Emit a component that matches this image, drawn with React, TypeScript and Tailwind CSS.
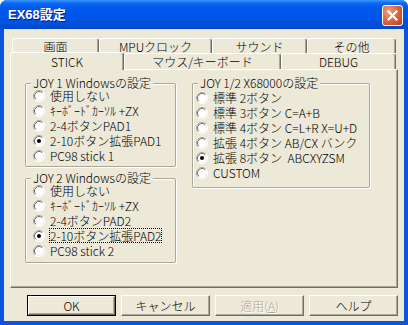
import React from "react";

const JP = "font-['Noto_Sans_CJK_JP','Liberation_Sans',sans-serif]";

function Radio({ checked }: { checked?: boolean }) {
  return (
    <svg width="12" height="12" viewBox="0 0 12 12" className="shrink-0">
      <circle cx="6" cy="6" r="5.5" fill="#ffffff" />
      <path d="M2.11 9.89 A5.5 5.5 0 0 1 9.89 2.11" stroke="#aca899" fill="none" />
      <path d="M9.89 2.11 A5.5 5.5 0 0 1 2.11 9.89" stroke="#ffffff" fill="none" />
      <path d="M2.82 9.18 A4.5 4.5 0 0 1 9.18 2.82" stroke="#716f64" fill="none" />
      <path d="M9.18 2.82 A4.5 4.5 0 0 1 2.82 9.18" stroke="#f1efe2" fill="none" />
      {checked && <circle cx="6" cy="6" r="2" fill="#000000" />}
    </svg>
  );
}

function Row({ label, checked, focus }: { label: string; checked?: boolean; focus?: boolean }) {
  return (
    <div className="flex items-center h-[15px] gap-[5px]">
      <Radio checked={checked} />
      <span
        className={`whitespace-pre leading-[13px] text-[12px] font-light text-black ${
          focus ? "outline outline-1 outline-dotted outline-black" : ""
        }`}
      >
        {label}
      </span>
    </div>
  );
}

function Group({
  title,
  className,
  children,
}: {
  title: string;
  className: string;
  children: React.ReactNode;
}) {
  return (
    <div
      className={`relative border border-[#aca899] rounded-[2px] shadow-[inset_1px_1px_0_#ffffff,1px_1px_0_#ffffff] flex flex-col ${className}`}
    >
      <div className="absolute -top-[7px] left-[5px] px-[2px] bg-[#ece9d8] leading-[12px] text-[12px] font-light text-black whitespace-pre">
        {title}
      </div>
      {children}
    </div>
  );
}

function Tab({ label, w, h }: { label: string; w: string; h: string }) {
  return (
    <div
      className={`${w} ${h} shrink-0 flex items-center justify-center bg-[#ece9d8] border-t border-l border-white border-r border-r-[#716f64] shadow-[inset_-1px_0_0_#aca899] rounded-tl-[3px] rounded-tr-[3px] text-[12px] font-light leading-[13px] text-black`}
    >
      {label}
    </div>
  );
}

function Btn({ children, def, disabled }: { children: React.ReactNode; def?: boolean; disabled?: boolean }) {
  const inner = (
    <div
      className={`w-full h-full flex items-center justify-center bg-[#ece9d8] border border-t-white border-l-white border-r-[#716f64] border-b-[#716f64] shadow-[inset_-1px_-1px_0_#aca899] text-[12px] font-light leading-[14px] ${
        disabled ? "text-[#aca899] [text-shadow:1px_1px_0_#ffffff]" : "text-black"
      }`}
    >
      {children}
    </div>
  );
  return (
    <div className={`w-[89px] h-[21px] ${def ? "border border-black" : ""}`}>{inner}</div>
  );
}

export default function App() {
  return (
    <div className={`w-[408px] h-[325px] bg-white ${JP}`}>
      <div className="w-[408px] h-[325px] flex flex-col rounded-t-[7px] overflow-hidden bg-[#0b54dd]">
        {/* Title bar */}
        <div className="h-[29px] shrink-0 flex items-start bg-[linear-gradient(to_bottom,#3d95ff_0%,#0a66f0_12%,#0058ee_30%,#0055e5_60%,#0050dc_85%,#0046c8_100%)]">
          <div className="ml-[8px] mt-[6px] text-[13px] leading-[17px] font-bold text-white font-['Liberation_Sans','Noto_Sans_CJK_JP',sans-serif] [text-shadow:1px_1px_0_#0a1883]">
            EX68設定
          </div>
          <div className="ml-auto mr-[5px] mt-[5px] w-[21px] h-[21px] rounded-[3px] border border-white bg-[radial-gradient(circle_at_30%_30%,#f0a080_0%,#e2683f_45%,#c23a17_100%)] flex items-center justify-center">
            <svg width="11" height="11" viewBox="0 0 11 11">
              <path d="M1.5 1.5 L9.5 9.5 M9.5 1.5 L1.5 9.5" stroke="#ffffff" strokeWidth="2.2" strokeLinecap="square" />
            </svg>
          </div>
        </div>
        {/* Client */}
        <div className="flex-1 mx-[4px] mb-[4px] bg-[#ece9d8] flex flex-col">
          {/* Tab row 1 */}
          <div className="mt-[9px] ml-[8px] flex h-[15px]">
            <Tab label="画面" w="w-[87px]" h="h-[15px]" />
            <Tab label="MPUクロック" w="w-[113px]" h="h-[15px]" />
            <Tab label="サウンド" w="w-[95px]" h="h-[15px]" />
            <Tab label="その他" w="w-[89px]" h="h-[15px]" />
          </div>
          {/* Tab row 2 */}
          <div className="ml-[6px] flex items-end h-[16px]">
            <div className="relative z-10 -mb-[1px] w-[114px] h-[18px] shrink-0 flex items-center justify-center bg-[#ece9d8] border-t border-l border-white border-r border-r-[#716f64] shadow-[inset_-1px_0_0_#aca899] rounded-tl-[3px] rounded-tr-[3px] text-[12px] font-light leading-[13px] text-black pb-[1px]">
              STICK
            </div>
            <Tab label="マウス/キーボード" w="w-[157px]" h="h-[16px]" />
            <Tab label="DEBUG" w="w-[115px]" h="h-[16px]" />
          </div>
          {/* Panel */}
          <div className="ml-[6px] w-[388px] h-[219px] border border-t-white border-l-white border-r-[#716f64] border-b-[#716f64] shadow-[inset_-1px_-1px_0_#aca899] flex items-start pl-[14px] pt-[13px] gap-[16px]">
            <div className="flex flex-col gap-[11px]">
              <Group title="JOY 1 Windowsの設定" className="w-[151px] h-[84px] pl-[7px] pt-[4px]">
                <Row label="使用しない" />
                <Row label="ｷｰﾎﾞｰﾄﾞｶｰｿﾙ +ZX" />
                <Row label="2-4ボタンPAD1" />
                <Row label="2-10ボタン拡張PAD1" checked />
                <Row label="PC98 stick 1" />
              </Group>
              <Group title="JOY 2 Windowsの設定" className="w-[151px] h-[85px] pl-[7px] pt-[4px]">
                <Row label="使用しない" />
                <Row label="ｷｰﾎﾞｰﾄﾞｶｰｿﾙ +ZX" />
                <Row label="2-4ボタンPAD2" />
                <Row label="2-10ボタン拡張PAD2" checked focus />
                <Row label="PC98 stick 2" />
              </Group>
            </div>
            <Group title="JOY 1/2 X68000の設定" className="w-[178px] h-[105px] pl-[3px] pt-[6px]">
              <Row label="標準 2ボタン" />
              <Row label="標準 3ボタン C=A+B" />
              <Row label="標準 4ボタン C=L+R X=U+D" />
              <Row label="拡張 4ボタン AB/CX バンク" />
              <Row label="拡張 8ボタン  ABCXYZSM" checked />
              <Row label="CUSTOM" />
            </Group>
          </div>
          {/* Buttons */}
          <div className="mt-[7px] ml-[23px] flex gap-[5px]">
            <Btn def>OK</Btn>
            <Btn>キャンセル</Btn>
            <Btn disabled>
              <span>
                適用(<span className="underline">A</span>)
              </span>
            </Btn>
            <Btn>ヘルプ</Btn>
          </div>
        </div>
      </div>
    </div>
  );
}
